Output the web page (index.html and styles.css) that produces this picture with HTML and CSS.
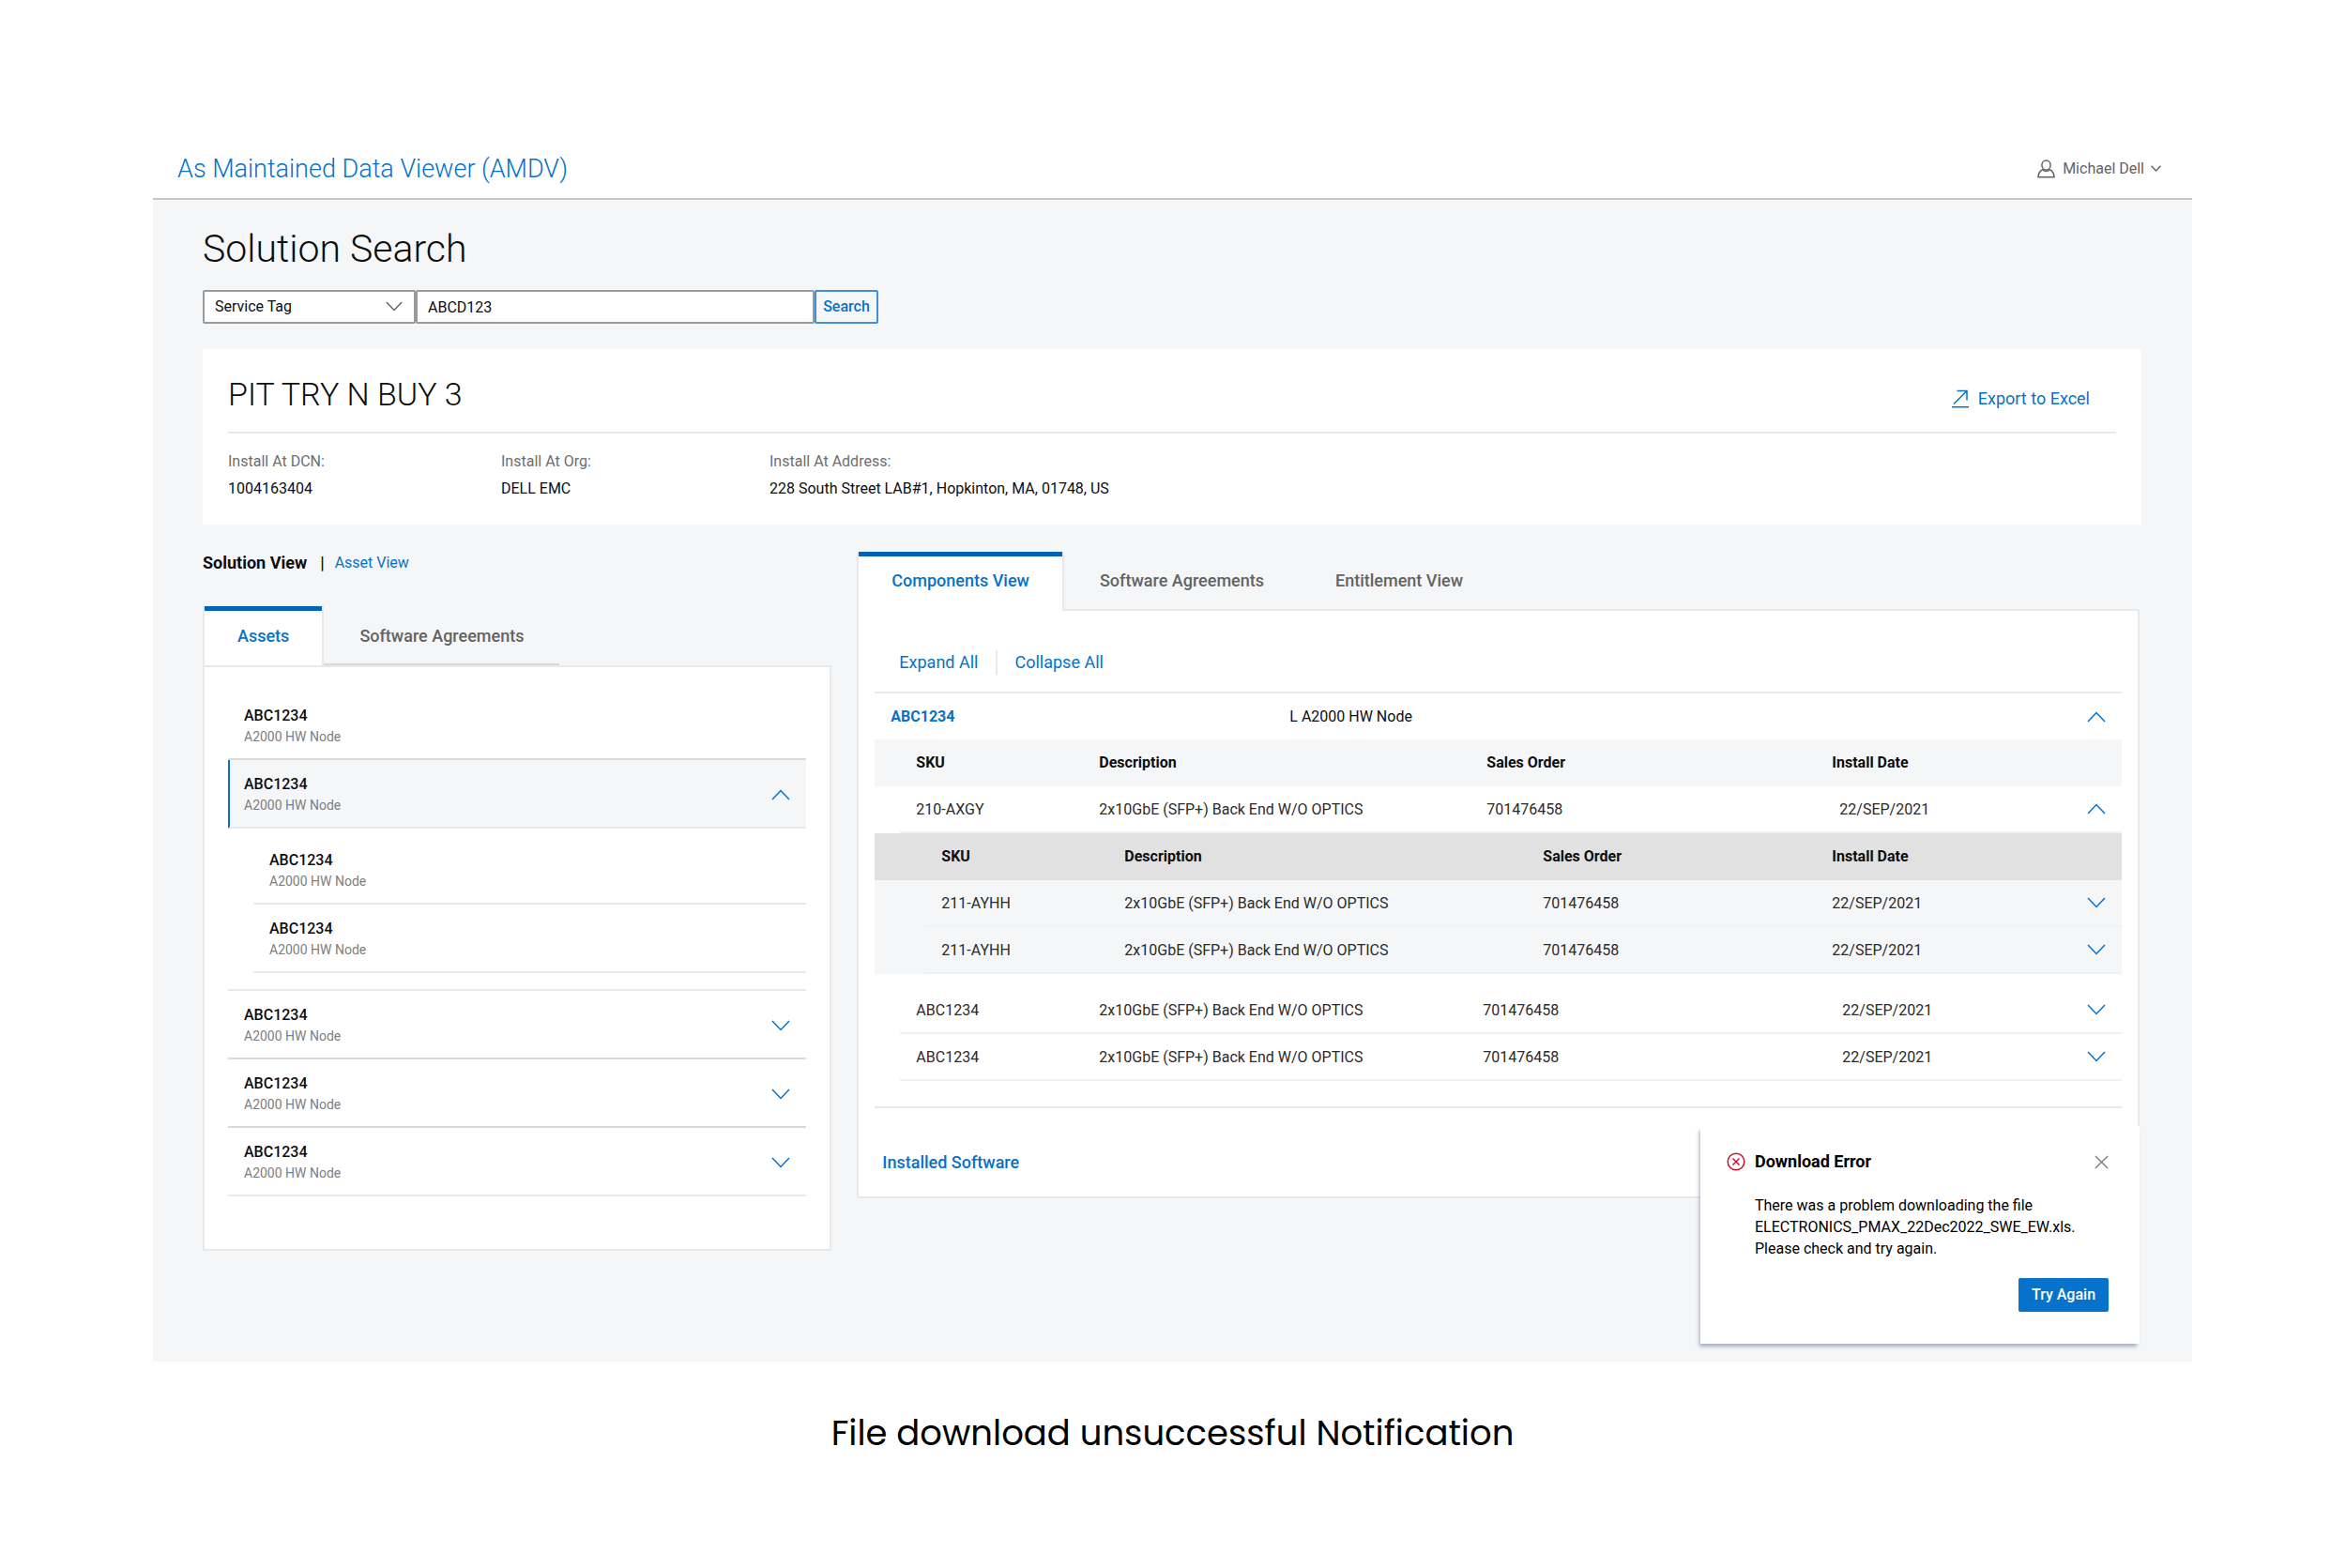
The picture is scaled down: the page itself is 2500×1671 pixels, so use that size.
FILE: index.html
```
<!DOCTYPE html>
<html lang="en">

<head>
    <meta charset="UTF-8" />
    <meta name="viewport" content="width=device-width, initial-scale=1.0" />
    <title>As Maintained Data Viewer (AMDV)</title>
    <link rel="stylesheet" href="styles.css">
</head>

<body>

    <!-- icon sprite -->
    <svg class="sprite" aria-hidden="true">
        <symbol id="down" viewBox="0 0 20 12">
            <path d="M1 1l9 9.5L19 1" />
        </symbol>
        <symbol id="up" viewBox="0 0 20 12">
            <path d="M1 11l9-9.5L19 11" />
        </symbol>
        <symbol id="user" viewBox="0 0 19 20">
            <ellipse cx="9.5" cy="6" rx="4.6" ry="5" />
            <path d="M5.800 10.800C3 12 1.200 14.800 1 18.800h17c-.2-4-2-6.800-4.800-8-2 2.400-5.400 2.400-7.400 0z" />
        </symbol>
        <symbol id="export" viewBox="0 0 18 20">
            <path d="M2 15.500L16 1.500M5.500 1.500H16V11.500M0 18.800h18" />
        </symbol>
        <symbol id="error" viewBox="0 0 20 20">
            <circle cx="10" cy="10" r="8.800" />
            <path d="M6.500 6.500l7 7M13.500 6.500l-7 7" />
        </symbol>
        <symbol id="close" viewBox="0 0 16 16">
            <path d="M1 1l14 14M15 1L1 15" />
        </symbol>
    </svg>

    <div class="app">
        <header class="topbar">
            <div class="brand">As Maintained Data Viewer (AMDV)</div>
            <button class="user" type="button">
                <svg class="user-icon"><use href="#user" /></svg>
                Michael Dell
                <svg class="user-caret"><use href="#down" /></svg>
            </button>
        </header>

        <main class="main">
            <h1 class="page-title">Solution Search</h1>

            <form class="search">
                <div class="select-wrap">
                    <select class="select" aria-label="Search by">
                        <option>Service Tag</option>
                    </select>
                    <svg class="select-caret"><use href="#down" /></svg>
                </div>
                <input class="search-input" type="text" value="ABCD123" aria-label="Search value">
                <button class="search-btn" type="button">Search</button>
            </form>

            <section class="summary">
                <div class="summary-head">
                    <h2 class="summary-title">PIT TRY N BUY 3</h2>
                    <a class="export" href="#">
                        <svg class="export-icon"><use href="#export" /></svg>
                        Export to Excel
                    </a>
                </div>
                <dl class="details">
                    <div>
                        <dt>Install At DCN:</dt>
                        <dd>1004163404</dd>
                    </div>
                    <div>
                        <dt>Install At Org:</dt>
                        <dd>DELL EMC</dd>
                    </div>
                    <div>
                        <dt>Install At Address:</dt>
                        <dd>228 South Street LAB#1, Hopkinton, MA, 01748, US</dd>
                    </div>
                </dl>
            </section>

            <div class="columns">
                <!-- left: assets -->
                <section>
                    <div class="view-switch">
                        <strong>Solution View</strong>
                        <span class="bar">|</span>
                        <a href="#">Asset View</a>
                    </div>
                    <div class="tabs">
                        <button class="tab active" type="button">Assets</button>
                        <button class="tab underlined" type="button">Software Agreements</button>
                    </div>
                    <div class="panel assets">
                        <ul class="asset-list">
                            <li class="asset dark">
                                <div>
                                    <div class="asset-name">ABC1234</div>
                                    <div class="asset-desc">A2000 HW Node</div>
                                </div>
                            </li>
                            <li class="asset selected">
                                <div>
                                    <div class="asset-name">ABC1234</div>
                                    <div class="asset-desc">A2000 HW Node</div>
                                </div>
                                <button class="toggle" type="button" aria-label="Collapse"><svg><use href="#up" /></svg></button>
                            </li>
                            <li class="children">
                                <ul class="asset-list">
                                    <li class="asset">
                                        <div>
                                            <div class="asset-name">ABC1234</div>
                                            <div class="asset-desc">A2000 HW Node</div>
                                        </div>
                                    </li>
                                    <li class="asset">
                                        <div>
                                            <div class="asset-name">ABC1234</div>
                                            <div class="asset-desc">A2000 HW Node</div>
                                        </div>
                                    </li>
                                </ul>
                            </li>
                            <li class="asset dark">
                                <div>
                                    <div class="asset-name">ABC1234</div>
                                    <div class="asset-desc">A2000 HW Node</div>
                                </div>
                                <button class="toggle" type="button" aria-label="Expand"><svg><use href="#down" /></svg></button>
                            </li>
                            <li class="asset dark">
                                <div>
                                    <div class="asset-name">ABC1234</div>
                                    <div class="asset-desc">A2000 HW Node</div>
                                </div>
                                <button class="toggle" type="button" aria-label="Expand"><svg><use href="#down" /></svg></button>
                            </li>
                            <li class="asset">
                                <div>
                                    <div class="asset-name">ABC1234</div>
                                    <div class="asset-desc">A2000 HW Node</div>
                                </div>
                                <button class="toggle" type="button" aria-label="Expand"><svg><use href="#down" /></svg></button>
                            </li>
                        </ul>
                    </div>
                </section>

                <!-- right: components -->
                <section>
                    <div class="tabs joined">
                        <button class="tab active" type="button">Components View</button>
                        <button class="tab" type="button">Software Agreements</button>
                        <button class="tab" type="button">Entitlement View</button>
                    </div>
                    <div class="panel components">
                        <div class="toolbar">
                            <a href="#">Expand All</a>
                            <a href="#">Collapse All</a>
                        </div>

                        <div class="node">
                            <a class="node-id" href="#">ABC1234</a>
                            <span class="node-name">L A2000 HW Node</span>
                            <button class="toggle" type="button" aria-label="Collapse"><svg><use href="#up" /></svg></button>
                        </div>

                        <table class="grid">
                            <colgroup>
                                <col class="c-sku"><col class="c-desc"><col class="c-order"><col>
                                <col class="c-toggle">
                            </colgroup>
                            <thead>
                                <tr>
                                    <th>SKU</th>
                                    <th>Description</th>
                                    <th>Sales Order</th>
                                    <th>Install Date</th>
                                    <th></th>
                                </tr>
                            </thead>
                            <tbody>
                                <tr>
                                    <td>210-AXGY</td>
                                    <td>2x10GbE (SFP+) Back End W/O OPTICS</td>
                                    <td>701476458</td>
                                    <td class="date">22/SEP/2021</td>
                                    <td><button class="toggle" type="button" aria-label="Collapse"><svg><use href="#up" /></svg></button></td>
                                </tr>
                            </tbody>
                        </table>

                        <table class="grid nested">
                            <colgroup>
                                <col class="c-sku"><col class="c-desc"><col class="c-order"><col>
                                <col class="c-toggle">
                            </colgroup>
                            <thead>
                                <tr>
                                    <th>SKU</th>
                                    <th>Description</th>
                                    <th>Sales Order</th>
                                    <th>Install Date</th>
                                    <th></th>
                                </tr>
                            </thead>
                            <tbody>
                                <tr>
                                    <td>211-AYHH</td>
                                    <td>2x10GbE (SFP+) Back End W/O OPTICS</td>
                                    <td>701476458</td>
                                    <td>22/SEP/2021</td>
                                    <td><button class="toggle" type="button" aria-label="Expand"><svg><use href="#down" /></svg></button></td>
                                </tr>
                                <tr>
                                    <td>211-AYHH</td>
                                    <td>2x10GbE (SFP+) Back End W/O OPTICS</td>
                                    <td>701476458</td>
                                    <td>22/SEP/2021</td>
                                    <td><button class="toggle" type="button" aria-label="Expand"><svg><use href="#down" /></svg></button></td>
                                </tr>
                            </tbody>
                        </table>

                        <table class="grid rest">
                            <colgroup>
                                <col class="c-sku"><col class="c-desc"><col class="c-order"><col>
                                <col class="c-toggle">
                            </colgroup>
                            <tbody>
                                <tr>
                                    <td>ABC1234</td>
                                    <td>2x10GbE (SFP+) Back End W/O OPTICS</td>
                                    <td>701476458</td>
                                    <td>22/SEP/2021</td>
                                    <td><button class="toggle" type="button" aria-label="Expand"><svg><use href="#down" /></svg></button></td>
                                </tr>
                                <tr>
                                    <td>ABC1234</td>
                                    <td>2x10GbE (SFP+) Back End W/O OPTICS</td>
                                    <td>701476458</td>
                                    <td>22/SEP/2021</td>
                                    <td><button class="toggle" type="button" aria-label="Expand"><svg><use href="#down" /></svg></button></td>
                                </tr>
                            </tbody>
                        </table>

                        <div class="installed">
                            <a href="#">Installed Software</a>
                        </div>
                    </div>
                </section>
            </div>

            <!-- notification -->
            <div class="toast" role="alert">
                <div class="toast-head">
                    <svg class="toast-icon"><use href="#error" /></svg>
                    <strong class="toast-title">Download Error</strong>
                    <button class="toast-close" type="button" aria-label="Close"><svg><use href="#close" /></svg></button>
                </div>
                <p class="toast-text">There was a problem downloading the file ELECTRONICS_PMAX_22Dec2022_SWE_EW.xls. Please check and try again.</p>
                <button class="toast-btn" type="button">Try Again</button>
            </div>
        </main>
    </div>

    <p class="caption">File download unsuccessful Notification</p>

</body>

</html>
```
FILE: styles.css
```
* {
    box-sizing: border-box;
}

body {
    margin: 0;
    padding: 148px 164px 0 163px;
    background: #fff;
    color: #0e0e0e;
    font: 16px/24px Roboto, sans-serif;
}

h1,
h2,
p,
dl,
dd,
ul {
    margin: 0;
    padding: 0;
    font-weight: 400;
}

ul {
    list-style: none;
}

a {
    color: #0672cb;
    text-decoration: none;
}

button {
    padding: 0;
    border: 0;
    background: none;
    color: inherit;
    font: inherit;
    cursor: pointer;
}

svg {
    display: block;
    fill: none;
    stroke: currentColor;
    stroke-width: 1.5;
}

.sprite {
    position: absolute;
    width: 0;
    height: 0;
}

/* top bar */
.topbar {
    display: flex;
    justify-content: space-between;
    align-items: center;
    height: 65px;
    padding: 0 33px 0 26px;
    border-bottom: 2px solid #c8c9c7;
}

.brand {
    color: #0672cb;
    font-size: 27px;
    font-weight: 300;
}

.user {
    display: flex;
    align-items: center;
    color: #636363;
}

.user-icon {
    width: 19px;
    height: 20px;
    margin-right: 8px;
}

.user-caret {
    width: 11px;
    height: 7px;
    margin-left: 7px;
    stroke-width: 2.5;
}

/* page */
.main {
    position: relative;
    padding: 28px 54px 118px 53px;
    background: #f5f6f8;
}

.page-title {
    font-size: 41px;
    font-weight: 300;
    line-height: 48px;
}

.search {
    display: flex;
    margin-top: 20px;
}

.select-wrap {
    position: relative;
    width: 227px;
}

.select,
.search-input {
    width: 100%;
    height: 36px;
    padding: 0 11px;
    border: 2px solid #9a9b9d;
    border-radius: 2px;
    background: #fff;
    color: #0e0e0e;
    font: inherit;
    appearance: none;
}

.select-caret {
    position: absolute;
    top: 12px;
    right: 14px;
    width: 18px;
    height: 11px;
    color: #636363;
}

.search-input {
    width: 425px;
}

.search-btn {
    width: 68px;
    border: 2px solid #3f90d9;
    border-radius: 2px;
    color: #0672cb;
    font-weight: 500;
}

.summary {
    margin-top: 27px;
    padding: 26px 27px 26px;
    background: #fff;
}

.summary-head {
    display: flex;
    justify-content: space-between;
    align-items: center;
    padding: 0 28px 18px 0;
    border-bottom: 2px solid #e8e9ea;
}

.summary-title {
    font-size: 34px;
    font-weight: 300;
    line-height: 44px;
}

.export {
    display: flex;
    align-items: center;
    gap: 10px;
    margin-top: 10px;
    font-size: 18px;
}

.export-icon {
    width: 18px;
    height: 20px;
}

.details {
    display: grid;
    grid-template-columns: 291px 286px 1fr;
    margin-top: 18px;
}

.details dt {
    margin-bottom: 5px;
    color: #6e6e6e;
}

.columns {
    display: grid;
    grid-template-columns: 670fr 1366fr;
    gap: 27px;
    align-items: start;
    padding: 29px 2px 0 0;
}

/* tabs */
.view-switch {
    display: flex;
    margin-bottom: 34px;
}

.view-switch strong,
.view-switch .bar {
    font-size: 18px;
    font-weight: 700;
}

.view-switch .bar {
    margin: 0 11px 0 14px;
    font-weight: 500;
}

.tabs {
    display: flex;
}

.tab {
    height: 63px;
    padding: 0 38px;
    color: #636363;
    font-size: 18px;
    font-weight: 500;
}

.tab.active {
    position: relative;
    padding: 0 35px;
    border: solid #e8e9ea;
    border-width: 0 2px;
    background: #fff;
    box-shadow: inset 0 5px #0063b8;
    color: #0672cb;
}

.tab.underlined {
    padding-top: 2px;
    border-bottom: 2px solid #d8d9da;
}

/* the active tab runs into the panel below it */
.tabs.joined {
    height: 61px;
}

.tabs.joined .tab {
    height: 61px;
}

.tabs.joined .tab.active {
    height: 63px;
    padding-bottom: 2px;
}

.panel {
    border: 2px solid #e8e9ea;
    background: #fff;
}

/* asset list */
.assets {
    padding: 26px 25px 56px;
}

.asset {
    display: flex;
    justify-content: space-between;
    align-items: center;
    height: 73px;
    padding: 2px 17px 0;
    border-bottom: 2px solid #e8e9ea;
}

.asset.dark {
    border-color: #d8d9da;
}

.asset.selected {
    padding-left: 15px;
    border-left: 2px solid #0672cb;
    background: #f5f6f8;
}

.asset-name {
    line-height: 22px;
    font-weight: 500;
}

.asset-desc {
    color: #7e7e7e;
    font-size: 14px;
    line-height: 22px;
}

.children {
    padding: 8px 0 17px 27px;
    border-bottom: 2px solid #e8e9ea;
}

.toggle {
    color: #0672cb;
}

.toggle svg {
    width: 20px;
    height: 12px;
}

/* components */
.components {
    padding: 42px 17px 24px;
}

.toolbar {
    display: flex;
    margin-bottom: 18px;
    padding-left: 26px;
    font-size: 18px;
    line-height: 26px;
}

.toolbar a + a {
    margin-left: 19px;
    padding-left: 18px;
    border-left: 2px solid #e8e9ea;
}

.node {
    display: grid;
    grid-template-columns: 425px 1fr auto;
    align-items: center;
    height: 51px;
    padding: 0 17px;
    border-top: 2px solid #e8e9ea;
}

.node-id {
    font-weight: 700;
}

.grid {
    width: 100%;
    border-collapse: collapse;
    table-layout: fixed;
}

.grid th,
.grid td {
    height: 50px;
    padding: 0;
    text-align: left;
}

.grid th {
    background: #f5f6f8;
    font-weight: 700;
}

.grid td {
    background: linear-gradient(#f0f1f2, #f0f1f2) 0 100% / 100% 2px no-repeat;
    color: #2b2b2b;
}

.grid th:first-child,
.grid td:first-child {
    padding-left: 44px;
}

.grid td:first-child {
    background-position-x: 27px;
}

.grid td.date {
    padding-left: 8px;
}

.grid .toggle {
    vertical-align: middle;
}

.grid .toggle svg {
    margin-top: -3px;
}

.c-sku {
    width: 239px;
}

.c-desc {
    width: 413px;
}

.c-order {
    width: 368px;
}

.c-toggle {
    width: 37px;
}

.nested {
    background: #f5f6f8;
}

.nested th {
    background: #e1e1e1;
}

.nested th:first-child,
.nested td:first-child {
    padding-left: 71px;
}

.nested td:first-child {
    background-position-x: 54px;
}

.nested .c-sku {
    width: 266px;
}

.nested .c-desc {
    width: 446px;
}

.nested .c-order {
    width: 308px;
}

.rest {
    margin-top: 14px;
}

.rest .c-desc {
    width: 409px;
}

.rest .c-order {
    width: 383px;
}

.installed {
    margin-top: 27px;
    padding: 46px 0 0 8px;
    border-top: 2px solid #e8e9ea;
    font-size: 18px;
    font-weight: 500;
}

/* notification */
.toast {
    position: absolute;
    right: 56px;
    bottom: 19px;
    width: 468px;
    padding: 26px 33px 34px 28px;
    background: #fff;
    box-shadow: -2px 4px 4px -1px #a3afc0;
    color: #000;
}

.toast-head {
    display: flex;
    align-items: center;
}

.toast-icon {
    width: 20px;
    height: 20px;
    margin-right: 10px;
    color: #ce1126;
}

.toast-title {
    font-size: 18px;
}

.toast-close {
    margin-left: auto;
    color: #7e7e7e;
}

.toast-close svg {
    width: 15px;
    height: 15px;
}

.toast-text {
    margin: 23px 0 20px 30px;
    line-height: 23px;
}

.toast-btn {
    display: block;
    width: 96px;
    height: 36px;
    margin-left: auto;
    border-radius: 2px;
    background: #0672cb;
    color: #fff;
    font-weight: 500;
}

.caption {
    margin-top: 51px;
    color: #000;
    font: 37px/50px Poppins, sans-serif;
    text-align: center;
}
```
